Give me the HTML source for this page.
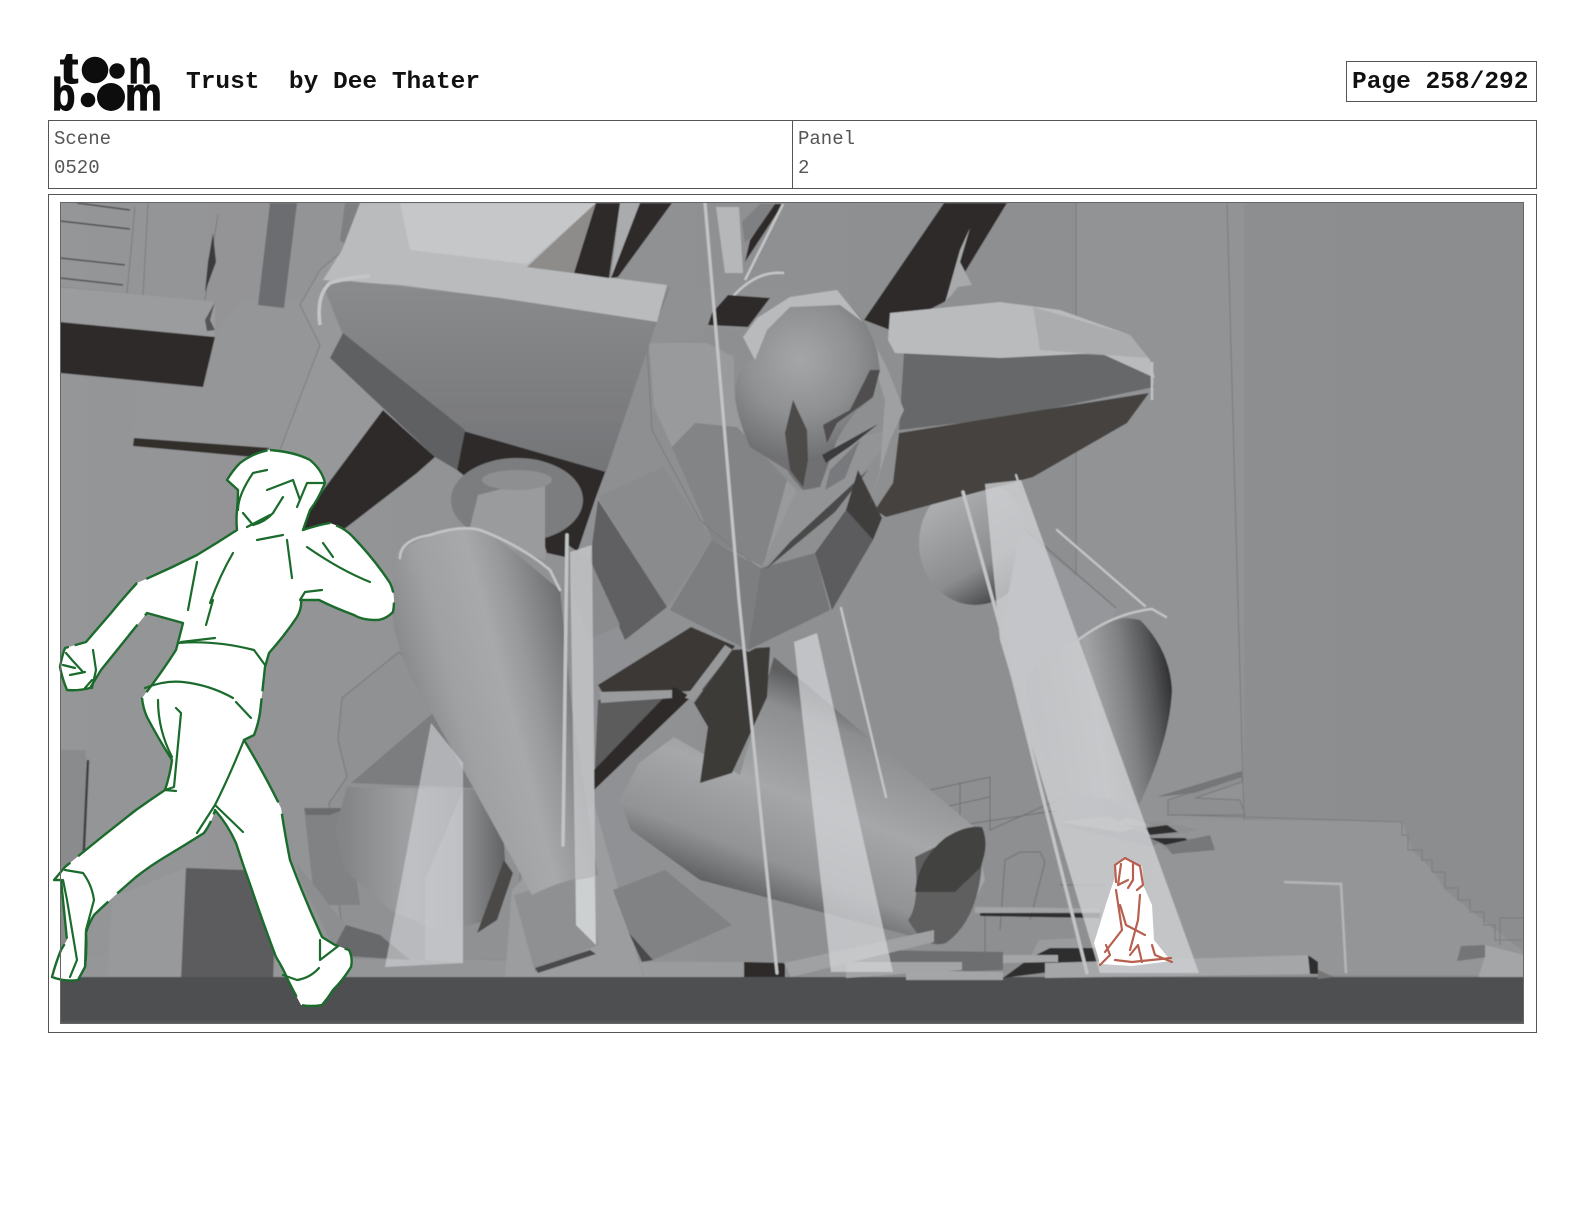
<!DOCTYPE html>
<html><head><meta charset="utf-8"><title>Trust by Dee Thater</title>
<style>
html,body{margin:0;padding:0;background:#fff}
body{width:1584px;height:1224px;position:relative;overflow:hidden}
.t{position:absolute;font-family:"Liberation Mono",monospace;white-space:pre}
.b{font-weight:bold;font-size:24.5px;color:#111}
.l{font-size:19px;color:#555}
.box{position:absolute;box-sizing:border-box;border:1px solid #555}
svg{position:absolute;left:0;top:0}
</style></head><body>
<svg width="1584" height="1224" viewBox="0 0 1584 1224">
<defs>
<clipPath id="c"><rect x="60" y="202" width="1464" height="822"/></clipPath>
<filter id="s" x="0" y="0" width="100%" height="100%"><feGaussianBlur stdDeviation=".5"/></filter>
<linearGradient id="bg" x1="0" x2="1" y1="0" y2="0"><stop offset="0" stop-color="#959698"/><stop offset=".5" stop-color="#8f9092"/><stop offset="1" stop-color="#8c8d8f"/></linearGradient>
<linearGradient id="cone1" gradientUnits="userSpaceOnUse" x1="400" y1="640" x2="590" y2="590">
<stop offset="0" stop-color="#8b8c8e"/><stop offset=".2" stop-color="#a0a1a3"/><stop offset=".45" stop-color="#a8a9ab"/><stop offset=".6" stop-color="#97989a"/><stop offset=".75" stop-color="#7f8082"/><stop offset=".87" stop-color="#6a6b6d"/><stop offset=".95" stop-color="#434345"/><stop offset="1" stop-color="#77787a"/></linearGradient>
<linearGradient id="cone2" gradientUnits="userSpaceOnUse" x1="830" y1="690" x2="750" y2="900">
<stop offset="0" stop-color="#5e5f61"/><stop offset=".15" stop-color="#8d8e90"/><stop offset=".5" stop-color="#a6a7a9"/><stop offset=".8" stop-color="#929395"/><stop offset="1" stop-color="#5f6062"/></linearGradient>
<linearGradient id="cone3" gradientUnits="userSpaceOnUse" x1="1040" y1="700" x2="1172" y2="680">
<stop offset="0" stop-color="#8c8d8f"/><stop offset=".4" stop-color="#a3a4a6"/><stop offset=".65" stop-color="#808183"/><stop offset=".85" stop-color="#565759"/><stop offset="1" stop-color="#2f2f31"/></linearGradient>
<linearGradient id="cone4" gradientUnits="userSpaceOnUse" x1="345" y1="860" x2="510" y2="860">
<stop offset="0" stop-color="#848587"/><stop offset=".4" stop-color="#a0a1a3"/><stop offset=".75" stop-color="#8a8b8d"/><stop offset="1" stop-color="#5c5d5f"/></linearGradient>
<radialGradient id="head" gradientUnits="userSpaceOnUse" cx="800" cy="360" r="100"><stop offset="0" stop-color="#a5a6a8"/><stop offset=".55" stop-color="#8f9092"/><stop offset="1" stop-color="#6f7072"/></radialGradient>
<linearGradient id="ball" gradientUnits="userSpaceOnUse" x1="925" y1="500" x2="985" y2="605"><stop offset="0" stop-color="#b0b1b3"/><stop offset=".7" stop-color="#8c8d8f"/><stop offset="1" stop-color="#4c4d4f"/></linearGradient>
<linearGradient id="wing" x1="0" x2="0" y1="0" y2="1"><stop offset="0" stop-color="#8a8b8d"/><stop offset="1" stop-color="#747577"/></linearGradient>
</defs>

<!-- logo -->
<g font-family="'Liberation Sans',sans-serif" font-weight="bold" fill="#0d0d0d" stroke="#0d0d0d" stroke-width="1.2">
<text transform="translate(60,83) scale(1.25,1)" font-size="44" stroke-width="1">t</text>
<text transform="translate(128.5,83) scale(.82,1)" font-size="46">n</text>
<text transform="translate(52,110) scale(.85,1)" font-size="45">b</text>
<text transform="translate(125,110) scale(.9,1)" font-size="46">m</text>
</g>
<g fill="#0d0d0d"><circle cx="95" cy="70" r="13.3"/><circle cx="117" cy="71" r="7.7"/><circle cx="88" cy="100" r="7.3"/><circle cx="111" cy="97" r="14"/></g>

<!-- scene -->
<g filter="url(#s)"><g clip-path="url(#c)">
<rect x="60" y="202" width="1464" height="822" fill="url(#bg)"/>
<rect x="1076" y="202" width="168" height="620" fill="#929395"/>
<g stroke="#7b7c7e" stroke-width="1" fill="none"><path d="M1076,202V590"/><path d="M1227,202L1244,820"/></g>

<!-- left structure -->
<polygon points="133,438 138,384 206,388 215,337 240,300 300,300 322,345 280,450" fill="#959698"/>
<g stroke="#4f5052" stroke-width="1.6" fill="none"><path d="M77,203L130,210"/><path d="M60,221L130,229"/><path d="M60,258L125,265"/><path d="M60,278L123,285"/></g>
<g stroke="#7a7b7d" stroke-width="1" fill="none"><path d="M135,207L127,293"/><path d="M148,203L143,295"/><path d="M60,287L203,302"/><path d="M218,214L205,300"/></g>
<polygon points="213,233 216,262 205,292 208,262" fill="#3a3a3c"/>
<polygon points="60,287 215,302 215,337 60,322" fill="#9b9c9e"/>
<polygon points="60,322 215,337 203,387 60,373" fill="#2f2c2a"/>
<polygon points="215,302 210,320 215,330 207,331 205,320" fill="#555"/>
<polygon points="270,203 297,203 284,308 258,305" fill="#6c6d6f"/>
<polygon points="134,438 270,448 253,457 133,446" fill="#312e2c"/>
<polygon points="347,247 320,270 300,305 320,345 280,450 310,520 400,420" fill="#97989a" stroke="#7d7e80"/>
<polygon points="345,203 362,203 352,250 340,240" fill="#7f8082"/>

<!-- lower-left wall bits -->
<polygon points="60,750 86,750 84,960 60,960" fill="#8a8b8d"/>
<path d="M88,760L83,870" stroke="#3c3d3f" stroke-width="2.5"/>
<polygon points="399,652 342,698 338,740 347,777 329,803 345,960 520,960 520,760" fill="#909193" stroke="#77787a"/>
<polygon points="304,808 347,808 360,905 315,905" fill="#818284"/>
<polygon points="304,808 347,808 330,815 306,815" fill="#6b6c6e"/>
<polygon points="296,862 345,925 405,960 340,960 300,880" fill="#8d8e90"/>
<polygon points="86,958 540,960 540,977 86,977" fill="#959698"/>
<polygon points="113,897 186,868 181,982 107,980" fill="#98999b"/>
<polygon points="186,868 245,870 274,953 273,982 181,982" fill="#5b5c5e"/>

<!-- lower-left cone and dark -->
<path d="M347,787L500,790L505,860L490,920L440,932L390,910L345,870L335,830Z" fill="url(#cone4)"/>
<polygon points="504,860 513,873 497,920 477,933" fill="#4c4846"/>
<polygon points="351,783 433,713 476,788" fill="#7c7d7f"/>
<polygon points="346,925 380,935 410,960 330,955" fill="#68696b"/>

<!-- back railing + chair -->
<g stroke="#707173" stroke-width="1" fill="none">
<path d="M930,790L990,777V830L1062,798M930,810L990,797M960,782V830M930,830L1060,810"/>
<path d="M1000,930L1005,860L1020,852H1040L1045,862L1030,920"/>
<path d="M980,908H1100V975M985,910V970M1060,885H1105"/>
</g>
<polygon points="975,907 1100,908 1100,912 975,913" fill="#a3a4a6"/>
<polygon points="980,913 1100,913 1100,918 980,916" fill="#2f2f31"/>

<!-- stairs / building -->
<path d="M1180,820L1402,821L1412,850L1432,870L1445,890L1470,910L1495,930L1522,950V975H1150V830Z" fill="#949597"/>
<path d="M1180,815L1402,822V835H1408V850H1422V860H1432V872H1445V888H1458V900H1470V912H1484V925H1495V940H1522" stroke="#7a7b7d" fill="none"/>
<path d="M1284,882L1341,884L1346,973" stroke="#b4b5b7" stroke-width="2.5" fill="none"/>
<polygon points="1168,800 1242,776 1242,782 1195,798 1240,800 1245,815 1168,815" fill="#8e8f91" stroke="#77787a"/>
<polygon points="1156,797 1242,771 1242,777 1194,793" fill="#757678"/>

<!-- right lower blocks -->
<polygon points="1461,946 1485,945 1488,957 1457,961" fill="#737476"/>
<polygon points="1485,945 1524,955 1524,978 1478,978 1485,957" fill="#a4a5a7"/>
<path d="M1500,918H1524M1500,918V945" stroke="#7b7c7e" fill="none"/>

<!-- center cone -->
<path d="M774,657L974,827L985,880L960,930L920,945L908,935L700,880L631,830L620,800L639,763L674,737L740,775Z" fill="url(#cone2)"/>
<path d="M915,857Q920,905 908,920Q925,950 946,943Q978,920 982,863Q975,830 950,840Z" fill="#5e5f61"/>
<path d="M915,892Q918,860 945,838Q965,825 982,827Q990,845 980,868L955,892Z" fill="#434241"/>

<!-- triangle / block / base -->
<polygon points="594,803 643,977 505,977 512,890" fill="#9c9d9f"/>
<polygon points="613,890 665,870 732,925 653,960 629,933" fill="#818284"/>
<polygon points="629,933 653,960 642,962" fill="#4a4a4c"/>
<polygon points="514,895 592,872 598,945 535,972" fill="#8f9092"/>
<polygon points="535,968 590,950 596,954 538,973" fill="#4a4a4c"/>
<polygon points="639,962 744,962 744,977 644,977" fill="#9a9b9d"/>
<polygon points="744,962 785,963 785,977 744,977" fill="#2f2c2a"/>

<!-- floor -->
<rect x="60" y="977" width="1464" height="47" fill="#4e4f51"/>
<rect x="60" y="1021" width="1464" height="3" fill="#58595b"/>

<!-- debris -->
<polygon points="860,950 1003,952 1003,970 846,977" fill="#6d6e70"/>
<polygon points="784,963 934,930 934,942 791,977" fill="#a0a1a3"/>
<polygon points="846,962 962,962 962,970 846,978" fill="#a3a4a6"/>
<polygon points="906,970 1003,972 1003,980 906,980" fill="#a4a5a7"/>
<polygon points="1039,940 1077,938 1087,960 1030,958" fill="#9a9b9d"/>
<polygon points="1030,958 1050,948 1095,948 1105,965 1003,978" fill="#2f2e2e"/>
<polygon points="1003,955 1058,955 1058,962 1003,963" fill="#a4a5a7"/>
<polygon points="1045,963 1310,955 1317,974 1045,978" fill="#a5a6a8"/>
<polygon points="1308,955 1318,962 1318,974 1310,974" fill="#2f2e2e"/>
<polygon points="1318,970 1334,977 1318,979" fill="#777"/>

<!-- dark crotch -->
<polygon points="598,685 691,627 735,646 703,690 605,697" fill="#3a3735"/>
<polygon points="598,700 674,697 619,760 594,790" fill="#5b5b5d"/>
<polygon points="594,790 691,697 674,687 594,770" fill="#2f2c2a"/>
<polygon points="600,692 672,690 672,698 601,703" fill="#9a9b9d"/>
<polygon points="694,700 733,650 725,645 685,698" fill="#97989a"/>
<polygon points="770,647 767,697 732,773 700,783 708,727 694,703 732,650" fill="#3d3a38"/>

<!-- dark under wing + upper left sphere + cylinder -->
<polygon points="465,430 457,470 467,478 490,467 520,467 547,553 565,557 578,550 596,497 606,470 520,447" fill="#2f2c2a"/>
<ellipse cx="517" cy="500" rx="66" ry="42" fill="#7c7d7f"/>
<polygon points="478,495 545,478 545,560 468,535" fill="#9a9b9d"/>
<ellipse cx="517" cy="480" rx="35" ry="10" fill="#8e8f91"/>

<!-- left leg cone -->
<path d="M397,552Q440,525 485,528L560,590L572,710L598,875Q565,878 532,895Q475,790 430,710Q392,650 392,605Q392,575 397,552Z" fill="url(#cone1)"/>

<!-- body -->
<polygon points="667,287 649,343 598,497 663,600 748,652 832,610 890,507 904,390 877,330 832,290" fill="#8e8f91"/>
<polygon points="667,287 832,290 745,335 650,343" fill="#909193"/>
<polygon points="649,343 707,343 734,357 734,390 748,443 783,477 797,490 761,568 712,540 672,447 654,407" fill="#999a9c"/>
<polygon points="672,447 695,423 737,427 787,480 763,567 712,540" fill="#838486"/>
<polygon points="598,497 663,467 712,540 667,607" fill="#8a8b8d"/>
<polygon points="712,540 761,568 748,650 670,610" fill="#7d7e80"/>
<polygon points="761,568 815,553 830,610 748,650" fill="#757678"/>
<polygon points="815,553 846,510 873,540 832,610" fill="#5b5c5e"/>
<polygon points="797,490 815,490 832,443 890,430 882,450 832,507 761,568" fill="#939496"/>
<polygon points="790,542 868,470 835,512 765,570" fill="#4a4a4a"/>
<polygon points="846,510 858,470 882,518 873,540" fill="#3f3d3c"/>
<polygon points="598,500 667,607 625,640 590,560" fill="#606163"/>
<polygon points="565,543 590,560 620,625 590,640 575,600" fill="#8a8b8d"/>
<path d="M669,288L647,345L652,430L700,520L761,570" stroke="#7a7b7d" fill="none"/>

<!-- left wing -->
<polygon points="360,203 596,203 527,267 667,285 657,322 500,298 400,285 323,280 342,250" fill="#b9bbbd"/>
<polygon points="400,203 596,203 527,264 410,250" fill="#c5c7c9"/>
<polygon points="596,203 527,267 573,273" fill="#8d8c8b"/>
<polygon points="620,203 640,203 618,277 611,278" fill="#a9abad"/>
<polygon points="596,203 620,203 609,278 574,273" fill="#2f2c2a"/>
<polygon points="640,203 672,203 618,277 611,278" fill="#2f2c2a"/>
<polygon points="323,285 350,281 500,298 657,322 606,472 460,430 343,335" fill="url(#wing)"/>
<polygon points="343,333 330,358 383,408 435,457 457,470 465,430" fill="#5f6062"/>
<polygon points="383,410 303,517 305,530 315,540 327,533 343,530 417,473 435,457" fill="#2f2c2a"/>
<path d="M320,325Q316,295 330,283Q345,278 370,276" stroke="#c4c6c8" stroke-width="3.5" fill="none"/>

<!-- top center slab -->
<polygon points="716,207 739,207 743,273 725,273" fill="#b5b7b9"/>
<polygon points="742,222 760,204 783,204 745,243" fill="#7f8082"/>
<polygon points="750,240 775,204 783,204 745,262" fill="#2f2c2a"/>
<path d="M783,204L745,280" stroke="#c4c6c8" stroke-width="2.5" fill="none"/>
<path d="M730,300Q755,270 784,273" stroke="#c4c6c8" stroke-width="2.5" fill="none"/>
<polygon points="728,295 770,298 748,327 708,325 712,313" fill="#2f2c2a"/>
<polygon points="705,328 747,330 742,343 705,342" fill="#8e8f91"/>

<!-- right strap -->
<polygon points="944,203 1007,203 948,300 890,330 864,320" fill="#2f2c2a"/>
<polygon points="970,228 960,262 972,285 958,287 945,303 960,250" fill="#a8a9ab"/>

<!-- right ball -->
<ellipse cx="975" cy="543" rx="56" ry="62" fill="url(#ball)"/>
<polygon points="1020,530 1116,608 1060,800 1000,640" fill="#96979a"/>
<path d="M1026,530L1116,608" stroke="#6f7072" fill="none"/>

<!-- right wing -->
<polygon points="904,353 1056,353 1145,357 1154,387 1011,417 899,430" fill="#666769"/>
<polygon points="899,433 1149,393 1127,423 1033,477 886,517 875,510 893,483" fill="#444240"/>
<polygon points="890,313 1000,302 1060,310 1130,335 1150,360 1155,378 1100,353 1000,358 895,353 888,340" fill="#b9bbbd"/>
<polygon points="1033,307 1130,335 1148,358 1040,350" fill="#aaacae"/>
<path d="M1152,362V400" stroke="#bfc1c3" stroke-width="2.5" fill="none"/>

<!-- right translucent band -->
<polygon points="863,320 887,368 904,410 890,440 868,510 880,470 885,400 870,350" fill="#9fa0a2"/>

<!-- head -->
<path d="M743,337Q750,325 757,318Q772,305 790,300Q815,293 837,297Q852,305 863,320Q872,335 877,350L880,370L873,397Q865,405 857,410Q845,425 837,440Q828,465 820,487L803,490Q795,482 787,470Q768,458 750,447Q738,420 735,397Q735,382 740,370Q747,362 755,358Z" fill="url(#head)"/>
<polygon points="793,400 785,433 790,470 803,487 808,460 807,430" fill="#4d4b4a"/>
<polygon points="880,370 873,397 837,423 827,443 823,425 850,410 870,370" fill="#4f4e4e"/>
<polygon points="822,455 878,424 852,445 826,463" fill="#3b3b3b"/>
<polygon points="830,470 860,440 845,478 825,490" fill="#78797b"/>
<polygon points="743,337 757,318 790,297 837,290 863,322 840,305 790,307 767,330 755,360" fill="#b8babc"/>

<!-- lower right cone + foot -->
<path d="M1078,640Q1110,612 1140,620Q1170,650 1172,690Q1170,740 1139,805L1060,790Q1025,720 1026,680Q1040,650 1078,640Z" fill="url(#cone3)"/>
<polygon points="1059,825 1114,820 1163,842 1150,847" fill="#838486"/>
<polygon points="1059,822 1120,815 1150,825 1120,832" fill="#a9aaac"/>
<polygon points="1100,810 1112,800 1130,815 1118,822" fill="#8c8d8f"/>
<polygon points="1125,825 1180,825 1198,830 1160,838" fill="#8e8f91"/>
<polygon points="1145,828 1167,825 1178,832 1150,835" fill="#2f2e2e"/>
<polygon points="1150,835 1193,838 1195,848 1165,850" fill="#8e8f91"/>
<polygon points="1150,838 1185,838 1192,844 1165,845" fill="#2f2e2e"/>
<polygon points="1165,845 1210,835 1215,850 1172,854" fill="#77787a"/>

<!-- beams -->
<polygon points="985,484 1021,480 1199,973 1100,973 1000,640" fill="#cfd1d3" fill-opacity=".8"/>
<polygon points="794,642 817,633 893,972 831,972" fill="#d4d6d8" fill-opacity=".72"/>
<polygon points="431,723 463,763 463,963 385,967" fill="#d2d4d6" fill-opacity=".62"/>
<polygon points="463,790 463,963 425,960 425,880" fill="#d2d4d6" fill-opacity=".3"/>
<polygon points="570,552 592,545 596,945 576,925" fill="#c9cbcd" fill-opacity=".75"/>
<polygon points="576,880 594,877 596,945 576,925" fill="#d2d4d6" fill-opacity=".8"/>

<!-- thin lines -->
<g stroke="#c2c4c6" fill="none" stroke-linecap="round">
<path d="M705,203L739,600L777,973" stroke-width="3.2"/>
<path d="M963,492L1000,626L1087,973" stroke-width="3.4"/>
<path d="M841,608L886,797" stroke-width="2.5"/>
<path d="M1057,530L1145,606" stroke-width="2.4"/>
<path d="M1078,640Q1114,613 1152,609L1166,617" stroke-width="2.4"/>
<path d="M567,535L563,845" stroke-width="3.5"/>
<path d="M400,558Q400,540 430,535Q460,525 480,530Q520,545 550,570L560,590" stroke-width="2.6"/>
<path d="M1016,475L1021,490" stroke-width="2"/>
</g>
</g></g>

<!-- man -->
<path d="M270,450Q295,452 310,460Q322,470 325,483Q318,500 310,510L303,530Q318,525 330,523Q345,528 353,537Q375,560 390,583Q396,595 393,612Q385,620 376,620Q362,620 354,615Q335,608 319,600L301,600Q302,608 297,617Q285,635 269,653L265,667Q262,695 260,713Q258,725 254,735L244,740Q250,750 254,757Q270,785 281,808Q285,835 290,860Q305,900 322,937Q330,942 335,945L349,950Q353,958 351,967Q343,980 333,990Q328,998 322,1005Q310,1007 301,1005Q294,992 288,980Q283,968 276,957Q262,920 251,887Q243,865 236,843Q228,825 215,810Q212,822 204,833Q185,845 165,857Q150,866 136,877Q115,895 94,915Q88,925 86,933Q87,950 85,967L78,980Q65,982 52,977Q56,962 61,950L67,940Q64,910 61,880L54,880L65,867Q100,838 136,810Q150,800 165,790Q170,775 172,760Q158,738 147,717Q143,708 142,698Q160,675 176,650Q180,635 183,623Q165,618 147,613Q125,640 101,670L90,688Q78,691 67,690Q62,678 60,667Q62,656 65,648L86,642Q98,628 111,613Q124,597 137,583Q167,570 197,555Q217,543 237,530Q236,520 237,510Q238,500 238,490L227,480Q233,470 240,463Q255,452 270,450Z" fill="#fff"/>
<path d="M270,450Q295,452 310,460Q322,470 325,483Q318,500 310,510L303,530Q318,525 330,523Q345,528 353,537Q375,560 390,583Q396,595 393,612Q385,620 376,620Q362,620 354,615Q335,608 319,600L301,600Q302,608 297,617Q285,635 269,653L265,667Q262,695 260,713Q258,725 254,735L244,740Q250,750 254,757Q270,785 281,808Q285,835 290,860Q305,900 322,937Q330,942 335,945L349,950Q353,958 351,967Q343,980 333,990Q328,998 322,1005Q310,1007 301,1005Q294,992 288,980Q283,968 276,957Q262,920 251,887Q243,865 236,843Q228,825 215,810Q212,822 204,833Q185,845 165,857Q150,866 136,877Q115,895 94,915Q88,925 86,933Q87,950 85,967L78,980Q65,982 52,977Q56,962 61,950L67,940Q64,910 61,880L54,880L65,867Q100,838 136,810Q150,800 165,790Q170,775 172,760Q158,738 147,717Q143,708 142,698Q160,675 176,650Q180,635 183,623Q165,618 147,613Q125,640 101,670L90,688Q78,691 67,690Q62,678 60,667Q62,656 65,648L86,642Q98,628 111,613Q124,597 137,583Q167,570 197,555Q217,543 237,530Q236,520 237,510Q238,500 238,490L227,480Q233,470 240,463Q255,452 270,450Z" fill="none" stroke="#1a6b2c" stroke-width="2.4" stroke-dasharray="150 6 90 10 210 7 120 12" stroke-linejoin="round"/>
<g fill="none" stroke="#1a6b2c" stroke-width="2.2" stroke-linecap="round" stroke-linejoin="round">
<path d="M238,510Q238,495 253,473L267,470"/><path d="M243,513L253,525Q265,522 273,513L283,497"/><path d="M267,490L293,480L300,500"/><path d="M297,507L307,483L323,483"/><path d="M247,527L270,515"/>
<path d="M257,540L283,535"/><path d="M287,540L292,578"/><path d="M233,553Q220,575 210,603"/><path d="M197,562L188,610"/><path d="M307,547Q340,570 370,582"/><path d="M323,543L333,557"/><path d="M300,600L305,592L322,590"/>
<path d="M178,643Q215,640 254,650L265,665"/><path d="M181,642L215,638"/><path d="M206,625L213,600"/>
<path d="M145,688Q165,680 183,682Q210,685 233,698"/><path d="M236,702L251,718"/><path d="M158,700Q158,730 172,757"/><path d="M176,708L181,713L174,787L165,790L176,791"/>
<path d="M244,740Q230,775 215,805L197,833"/><path d="M215,805L243,832"/>
<path d="M65,870L83,873Q92,885 94,900L86,930L85,967"/><path d="M63,880L67,900L77,960L70,977"/>
<path d="M320,940L320,960L337,947"/><path d="M283,975L297,980Q310,978 319,968"/>
<path d="M66,653L72,660L83,672"/><path d="M63,665L75,668M70,675L85,672M85,688L92,680"/><path d="M93,650L96,670L92,688"/>
</g>

<!-- girl -->
<path d="M1125,859L1142,866L1144,887L1152,905L1154,940L1171,961L1132,966L1100,964L1094,943L1107,901L1114,880L1116,864Z" fill="#fff"/>
<g fill="none" stroke="#b8604f" stroke-width="2.2" stroke-linecap="round" stroke-linejoin="round">
<path d="M1116,882L1115,865L1125,858L1140,866L1143,885L1137,890"/><path d="M1121,864L1118,885L1128,880"/><path d="M1133,864L1133,880L1128,888"/>
<path d="M1116,890L1119,910L1122,930L1105,952"/><path d="M1140,895L1138,920L1130,950"/><path d="M1120,905L1126,925L1145,935"/>
<path d="M1106,945L1110,955L1100,965"/><path d="M1130,955L1138,945L1142,962"/><path d="M1115,960L1132,962L1171,958"/><path d="M1152,945L1155,955L1172,962"/>
</g>
</svg>

<div class="t b" style="left:186px;top:69px">Trust  by Dee Thater</div>
<div class="box" style="left:1346px;top:61px;width:191px;height:41px"></div>
<div class="t b" style="left:1352px;top:69px">Page 258/292</div>
<div class="box" style="left:48px;top:120px;width:1489px;height:69px"></div>
<div class="box" style="left:792px;top:120px;width:1px;height:69px;border:0;background:#555"></div>
<div class="t l" style="left:54px;top:128px">Scene</div>
<div class="t l" style="left:54px;top:157px">0520</div>
<div class="t l" style="left:798px;top:128px">Panel</div>
<div class="t l" style="left:798px;top:157px">2</div>
<div class="box" style="left:48px;top:194px;width:1489px;height:839px"></div>
<div class="box" style="left:60px;top:202px;width:1464px;height:822px;border:1px solid #666"></div>
</body></html>
